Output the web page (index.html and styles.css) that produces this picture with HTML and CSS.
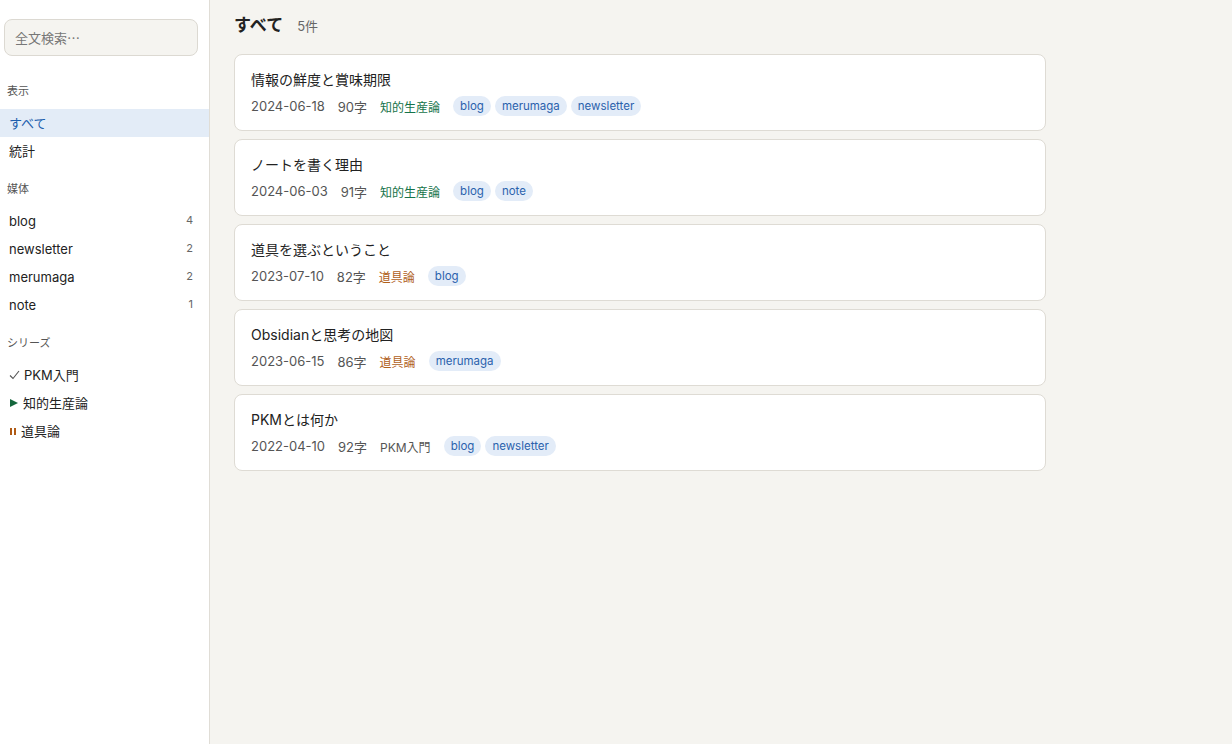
FILE: index.html
```html
<!DOCTYPE html>
<html lang="ja">
<head>
  <meta charset="UTF-8" />
  <meta name="viewport" content="width=device-width, initial-scale=1" />
  <title>ノート一覧</title>
  <link rel="stylesheet" href="styles.css">
</head>
<body>
  <aside class="sidebar">
    <input class="search" type="text" placeholder="全文検索⋯" />

    <h4 class="side-head first">表示</h4>
    <ul class="side-list">
      <li class="active">すべて</li>
      <li>統計</li>
    </ul>

    <h4 class="side-head">媒体</h4>
    <ul class="side-list">
      <li>blog <span class="count">4</span></li>
      <li>newsletter <span class="count">2</span></li>
      <li>merumaga <span class="count">2</span></li>
      <li>note <span class="count">1</span></li>
    </ul>

    <h4 class="side-head">シリーズ</h4>
    <ul class="side-list">
      <li>
        <svg class="mark done" width="11" height="10" viewBox="0 0 11 10"><polyline points="1,5.5 4,8.5 10,1" fill="none" stroke="#555" stroke-width="1.1"/></svg>PKM入門
      </li>
      <li><span class="mark play"></span>知的生産論</li>
      <li><span class="mark pause"></span>道具論</li>
    </ul>
  </aside>

  <main class="main">
    <div class="page-head">
      <h1>すべて</h1>
      <span class="total">5件</span>
    </div>

    <div class="cards">
      <div class="card">
        <div class="card-title">情報の鮮度と賞味期限</div>
        <div class="meta">
          <span>2024-06-18</span>
          <span>90字</span>
          <span class="series green">知的生産論</span>
          <span class="tags"><span class="tag">blog</span><span class="tag">merumaga</span><span class="tag">newsletter</span></span>
        </div>
      </div>
      <div class="card">
        <div class="card-title">ノートを書く理由</div>
        <div class="meta">
          <span>2024-06-03</span>
          <span>91字</span>
          <span class="series green">知的生産論</span>
          <span class="tags"><span class="tag">blog</span><span class="tag">note</span></span>
        </div>
      </div>
      <div class="card">
        <div class="card-title">道具を選ぶということ</div>
        <div class="meta">
          <span>2023-07-10</span>
          <span>82字</span>
          <span class="series orange">道具論</span>
          <span class="tags"><span class="tag">blog</span></span>
        </div>
      </div>
      <div class="card">
        <div class="card-title">Obsidianと思考の地図</div>
        <div class="meta">
          <span>2023-06-15</span>
          <span>86字</span>
          <span class="series orange">道具論</span>
          <span class="tags"><span class="tag">merumaga</span></span>
        </div>
      </div>
      <div class="card">
        <div class="card-title">PKMとは何か</div>
        <div class="meta">
          <span>2022-04-10</span>
          <span>92字</span>
          <span class="series">PKM入門</span>
          <span class="tags"><span class="tag">blog</span><span class="tag">newsletter</span></span>
        </div>
      </div>
    </div>
  </main>
</body>
</html>
```

FILE: styles.css
```css
body {
  font-family: Inter, "Noto Sans CJK JP", sans-serif;
  background-color: #f5f4f0;
  margin: 0;
  padding: 0;
  color: #222;
  display: flex;
  min-height: 100vh;
}

.sidebar {
  width: 210px;
  flex-shrink: 0;
  background: white;
  border-right: 1px solid #e0ddd6;
  padding: 19px 0 0;
  box-sizing: border-box;
}

.search {
  display: block;
  width: 194px;
  height: 37px;
  margin: 0 0 0 4px;
  padding: 0 10px;
  box-sizing: border-box;
  background: #f5f4f0;
  border: 1px solid #dcd9d2;
  border-radius: 8px;
  font-family: inherit;
  font-size: 13px;
  color: #333;
}

.search::placeholder {
  color: #777;
}

.side-head {
  margin: 15px 0 9px 7px;
  font-size: 11px;
  line-height: 18px;
  font-weight: normal;
  color: #555;
}

.side-head.first {
  margin-top: 26px;
}

.side-list {
  list-style: none;
  margin: 0;
  padding: 0;
}

.side-list li {
  display: flex;
  align-items: center;
  height: 28px;
  padding: 0 16px 0 9px;
  font-size: 13px;
  line-height: 18px;
  color: #222;
}

.side-list li.active {
  background: #e3ecf7;
  color: #1d5fae;
}

.count {
  margin-left: auto;
  font-size: 11px;
  color: #666;
  position: relative;
  top: -1px;
}

.mark {
  display: inline-block;
  flex-shrink: 0;
}

.mark.done {
  margin: 0 4px 0 0;
}

.mark.play {
  width: 0;
  height: 0;
  border-left: 8px solid #14663c;
  border-top: 4px solid transparent;
  border-bottom: 4px solid transparent;
  margin: 0 5px 0 1px;
}

.mark.pause {
  width: 2px;
  height: 7px;
  border-left: 2px solid #b05a14;
  border-right: 2px solid #b05a14;
  margin: 0 5px 0 1px;
}

.main {
  flex: 1;
  padding: 11px 24px 24px;
}

.page-head {
  display: flex;
  align-items: baseline;
  gap: 14px;
  margin-bottom: 18px;
}

.page-head h1 {
  margin: 0;
  font-size: 17px;
  font-weight: bold;
  color: #222;
}

.total {
  font-size: 13px;
  color: #666;
}

.cards {
  display: flex;
  flex-direction: column;
  gap: 8px;
  max-width: 812px;
}

.card {
  background: white;
  border: 1px solid #dedbd4;
  border-radius: 8px;
  padding: 15px 16px 14px;
}

.card-title {
  font-size: 14px;
  line-height: 20px;
  color: #222;
  margin-bottom: 6px;
}

.meta {
  display: flex;
  align-items: center;
  gap: 13px;
  font-size: 13px;
  color: #555;
  height: 20px;
}

.series {
  font-size: 12px;
  color: #555;
}

.series.green {
  color: #16734a;
}

.series.orange {
  color: #b0601a;
}

.tags {
  display: flex;
  gap: 4px;
}

.tag {
  background: #e3ecf8;
  color: #2b62ad;
  font-size: 11.5px;
  padding: 0 7px;
  line-height: 20px;
  border-radius: 10px;
}
```
